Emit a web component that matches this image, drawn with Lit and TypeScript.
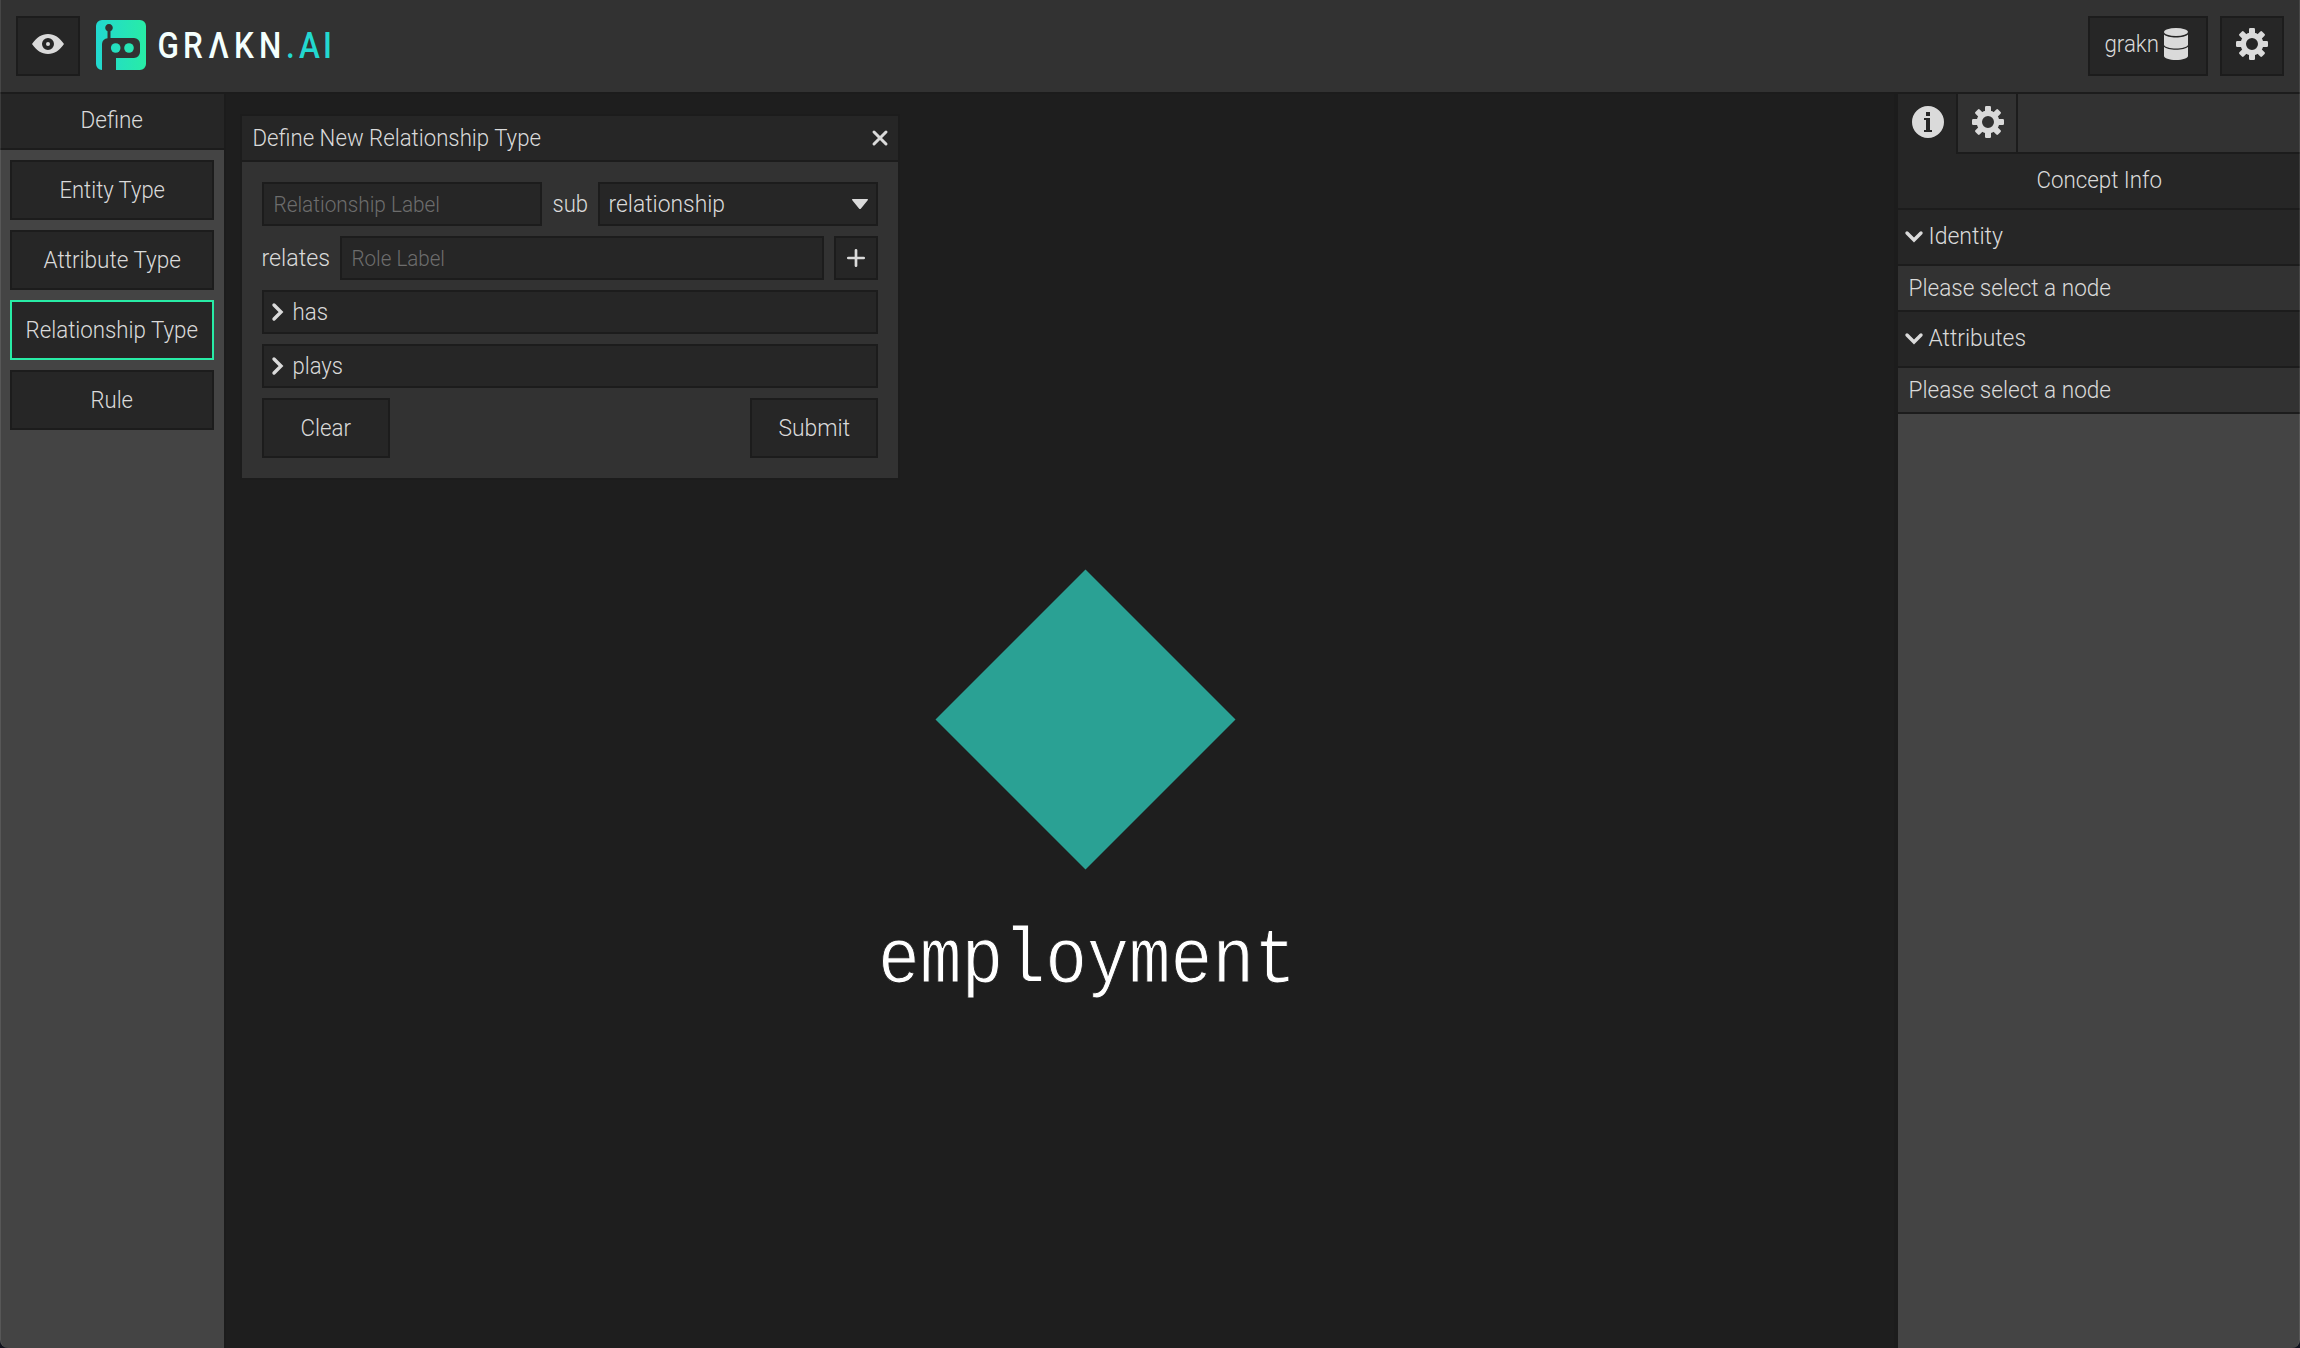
import { LitElement, html, svg, css } from "lit";
import { customElement, property } from "lit/decorators.js";

const icons = {
  eye: svg`<svg width="32" height="20" viewBox="0 0 32 20"><path fill="currentColor" fill-rule="evenodd" d="M0 10C4.500 3.500 9.500 0 16 0s11.500 3.500 16 10c-4.500 6.500-9.500 10-16 10S4.500 16.500 0 10ZM16 4a6 6 0 1 0 0 12 6 6 0 0 0 0-12Z"/><circle cx="16" cy="10" r="2" fill="currentColor"/></svg>`,
  gear: svg`<svg width="32" height="32" viewBox="0 0 32 32"><g fill="currentColor">${[0, 45, 90, 135].map(
    (a) => svg`<rect x="13" y="0" width="6" height="7" rx="1.200" transform="rotate(${a} 16 16)"/><rect x="13" y="25" width="6" height="7" rx="1.200" transform="rotate(${a} 16 16)"/>`
  )}</g><circle cx="16" cy="16" r="8.700" fill="none" stroke="currentColor" stroke-width="5.400"/></svg>`,
  database: svg`<svg width="24" height="32" viewBox="0 0 24 32"><g fill="currentColor"><ellipse cx="12" cy="4" rx="12" ry="4"/><path d="M0 6.500c2 2 6.500 3 12 3s10-1 12-3V17c-1 2.200-6 3.500-12 3.500S1 19.200 0 17Z"/><path d="M0 18.800c2 2.100 6.500 3 12 3s10-.9 12-3V28c0 2.300-5.400 4-12 4S0 30.300 0 28Z"/></g></svg>`,
  info: svg`<svg width="32" height="32" viewBox="0 0 32 32"><path fill="currentColor" fill-rule="evenodd" d="M16 0a16 16 0 1 1 0 32 16 16 0 0 1 0-32Zm-2 6v4h4V6Zm-2 6v2h2v10h-2v2h8v-2h-2V12Z"/></svg>`,
  close: svg`<svg width="16" height="16" viewBox="0 0 16 16"><path d="M2 2l12 12M14 2L2 14" fill="none" stroke="currentColor" stroke-width="3" stroke-linecap="round"/></svg>`,
  plus: svg`<svg width="18" height="18" viewBox="0 0 18 18"><path d="M9 1.300v15.400M1.300 9h15.400" fill="none" stroke="currentColor" stroke-width="2.700" stroke-linecap="round"/></svg>`,
  caret: svg`<svg width="16" height="10" viewBox="0 0 16 10"><path d="M.5 0h15c.6 0 .6.8.2 1.200L9 9.400c-.6.700-1.400.7-2 0L.3 1.200C-.1.800-.1 0 .5 0Z" fill="currentColor"/></svg>`,
  right: svg`<svg width="11" height="18" viewBox="0 0 11 18"><path d="M2 2l7 7-7 7" fill="none" stroke="currentColor" stroke-width="3.400" stroke-linecap="round"/></svg>`,
  down: svg`<svg width="18" height="11" viewBox="0 0 18 11"><path d="M2 2l7 7 7-7" fill="none" stroke="currentColor" stroke-width="3.400" stroke-linecap="round"/></svg>`,
  logo: svg`<svg width="50" height="50" viewBox="0 0 50 50"><defs><linearGradient id="g" gradientUnits="userSpaceOnUse" x1="0" y1="0" x2="50" y2="0"><stop offset="0" stop-color="#22d8d0"/><stop offset="1" stop-color="#28eca6"/></linearGradient></defs><path fill="url(#g)" fill-rule="evenodd" d="M6 0H44a6 6 0 0 1 6 6V44a6 6 0 0 1-6 6H20V38H38a6 6 0 0 0 6-6V24a6 6 0 0 0-6-6H14.500V11.200a3.800 3.800 0 1 0-3 0V18.200A6 6 0 0 0 6 24V50a6 6 0 0 1-6-6V6a6 6 0 0 1 6-6Z"/><circle cx="19.700" cy="28" r="4.800" fill="url(#g)"/><circle cx="33" cy="28" r="4.800" fill="url(#g)"/></svg>`,
};

/** A run of text set to a fixed measure, so labels keep their designed width. */
@customElement("ui-label")
class UiLabel extends LitElement {
  static styles = css`
    :host { display: block; flex: none; }
    svg { display: block; overflow: visible; }
    .run { font-family: Roboto, "Liberation Sans", sans-serif; font-weight: 300; fill: currentColor; }
  `;
  @property() text = "";
  @property({ type: Number }) width = 100;
  @property({ type: Number }) size = 23;
  render() {
    return html`<svg width=${this.width} height="28">
      <text class="run" x="-0.5" y="22.3" font-size=${this.size} textLength=${this.width + 0.5} lengthAdjust="spacingAndGlyphs">${this.text}</text>
    </svg>`;
  }
}

const label = (text: string, width: number, size = 23) =>
  html`<ui-label .text=${text} .width=${width} .size=${size}></ui-label>`;

const typeButtons = [
  { text: "Entity Type", width: 105, active: false },
  { text: "Attribute Type", width: 137, active: false },
  { text: "Relationship Type", width: 172, active: true },
  { text: "Rule", width: 42, active: false },
];

/** Wordmark letters are narrowed horizontally; origins are given in page pixels. */
const NARROW = 0.85;
const origins = (...xs: number[]) => xs.map((x) => (x / NARROW).toFixed(2)).join(" ");

@customElement("app-root")
class AppRoot extends LitElement {
  static styles = css`
    :host {
      display: flex; flex-direction: column; position: relative; box-sizing: border-box;
      width: 100vw; height: 100vh; overflow: hidden;
      background: #1e1e1e; color: #dadada;
      font-family: Roboto, "Liberation Sans", sans-serif; font-weight: 300;
    }
    * { box-sizing: border-box; }
    svg { display: block; flex: none; overflow: visible; }
    .edge { position: absolute; inset: 0; border: 1px solid rgba(255, 255, 255, 0.1); border-top: 0; border-bottom: 0; border-radius: 0 0 8px 8px; box-shadow: 0 0 0 10px #11131d; pointer-events: none; }
    .header { display: flex; align-items: center; gap: 16px; height: 94px; flex: none; padding: 0 16px; background: #323232; border-bottom: 2px solid #1c1c1c; }
    .box { display: flex; align-items: center; justify-content: center; background: #262626; border: 2px solid #1c1c1c; }
    .square { width: 64px; height: 60px; padding-bottom: 4px; }
    .brand { display: flex; align-items: center; gap: 13px; margin-bottom: 2px; }
    .word text { font-family: Roboto, "Liberation Sans", sans-serif; font-size: 37px; font-weight: 500; }
    .actions { display: flex; gap: 12px; margin-left: auto; }
    .keyspace { width: 120px; height: 60px; gap: 5px; padding: 0 4px 4px 0; }
    .main { display: flex; flex: 1; min-height: 0; }
    .left { width: 226px; flex: none; background: #444; border-right: 2px solid #1c1c1c; }
    .title { display: flex; justify-content: center; height: 56px; padding-top: 12px; background: #262626; border-bottom: 2px solid #1c1c1c; }
    .types { display: flex; flex-direction: column; gap: 10px; padding: 10px; }
    .type { height: 60px; }
    .active { border-color: #28eca6; }
    .canvas { flex: 1; position: relative; border-right: 4px solid #1c1c1c; }
    .node { position: absolute; left: 654px; top: 475px; display: flex; flex-direction: column; align-items: center; width: 411px; }
    .node-name text { font-family: "Liberation Mono", monospace; font-size: 77px; fill: #fff; stroke: #1e1e1e; stroke-width: 1px; }
    .dialog { position: absolute; left: 14px; top: 20px; width: 660px; border: 2px solid #1c1c1c; background: #323232; }
    .dialog-head { display: flex; align-items: center; justify-content: space-between; height: 46px; padding: 0 10px 0 11px; background: #262626; border-bottom: 2px solid #1c1c1c; }
    .form { display: flex; flex-direction: column; gap: 10px; padding: 20px; }
    .row { display: flex; align-items: center; justify-content: space-between; }
    .field { height: 44px; justify-content: flex-start; padding: 0 10px; }
    .half { width: 280px; }
    .role { width: 484px; }
    .hint { color: #6d6d6d; }
    .select { justify-content: space-between; padding: 0 8px 0 9px; }
    .add { width: 44px; height: 44px; }
    .fold { gap: 10px; padding: 0 8px; }
    .action { width: 128px; height: 60px; }
    .right { width: 402px; flex: none; background: #444; }
    .tabs { display: flex; height: 60px; background: #262626; }
    .tab { display: flex; align-items: center; justify-content: center; width: 60px; padding: 0 0 4px 2px; border-right: 2px solid #1c1c1c; background: #262626; }
    .off { background: #323232; border-bottom: 2px solid #1c1c1c; padding-bottom: 2px; }
    .rest { flex: 1; background: #323232; border-bottom: 2px solid #1c1c1c; }
    .section { display: flex; align-items: center; gap: 6px; height: 56px; padding: 0 7px 2px; background: #262626; border-bottom: 2px solid #1c1c1c; }
    .empty { display: flex; align-items: center; height: 46px; padding-left: 11px; background: #323232; border-bottom: 2px solid #1c1c1c; }
  `;

  render() {
    return html`
      <div class="header">
        <div class="box square">${icons.eye}</div>
        <div class="brand">
          ${icons.logo}
          <svg class="word" width="173" height="40">
            <text x=${origins(-1.5, 24, 49.5, 75, 100, 127, 140, 164)} y="33" transform="scale(${NARROW} 1)" fill="#f4fffd">GRΛKN<tspan fill="#22d8d0">.AI</tspan></text>
          </svg>
        </div>
        <div class="actions">
          <div class="box keyspace">${label("grakn", 54)}${icons.database}</div>
          <div class="box square">${icons.gear}</div>
        </div>
      </div>
      <div class="main">
        <div class="left">
          <div class="title">${label("Define", 62)}</div>
          <div class="types">
            ${typeButtons.map((b) => html`<div class="box type ${b.active ? "active" : ""}">${label(b.text, b.width)}</div>`)}
          </div>
        </div>
        <div class="canvas">
          <div class="node">
            <svg width="301" height="301" viewBox="0 0 301 301"><path d="M150.500 .5L300.500 150.500 150.500 300.500 .5 150.500Z" fill="#2aa194"/></svg>
            <svg class="node-name" width="411" height="150"><text x="-2" y="112" textLength="418" lengthAdjust="spacingAndGlyphs">employment</text></svg>
          </div>
          <div class="dialog">
            <div class="dialog-head">${label("Define New Relationship Type", 288)}${icons.close}</div>
            <div class="form">
              <div class="row">
                <div class="box field half hint">${label("Relationship Label", 166, 21.5)}</div>
                ${label("sub", 35)}
                <div class="box field half select">${label("relationship", 116)}${icons.caret}</div>
              </div>
              <div class="row">
                ${label("relates", 68)}
                <div class="box field role hint">${label("Role Label", 93, 21.5)}</div>
                <div class="box add">${icons.plus}</div>
              </div>
              <div class="box field fold">${icons.right}${label("has", 35)}</div>
              <div class="box field fold">${icons.right}${label("plays", 50)}</div>
              <div class="row">
                <div class="box action">${label("Clear", 50)}</div>
                <div class="box action">${label("Submit", 71)}</div>
              </div>
            </div>
          </div>
        </div>
        <div class="right">
          <div class="tabs">
            <div class="tab">${icons.info}</div>
            <div class="tab off">${icons.gear}</div>
            <div class="rest"></div>
          </div>
          <div class="title">${label("Concept Info", 125)}</div>
          <div class="section">${icons.down}${label("Identity", 74)}</div>
          <div class="empty">${label("Please select a node", 202)}</div>
          <div class="section">${icons.down}${label("Attributes", 97)}</div>
          <div class="empty">${label("Please select a node", 202)}</div>
        </div>
      </div>
      <div class="edge"></div>
    `;
  }
}
